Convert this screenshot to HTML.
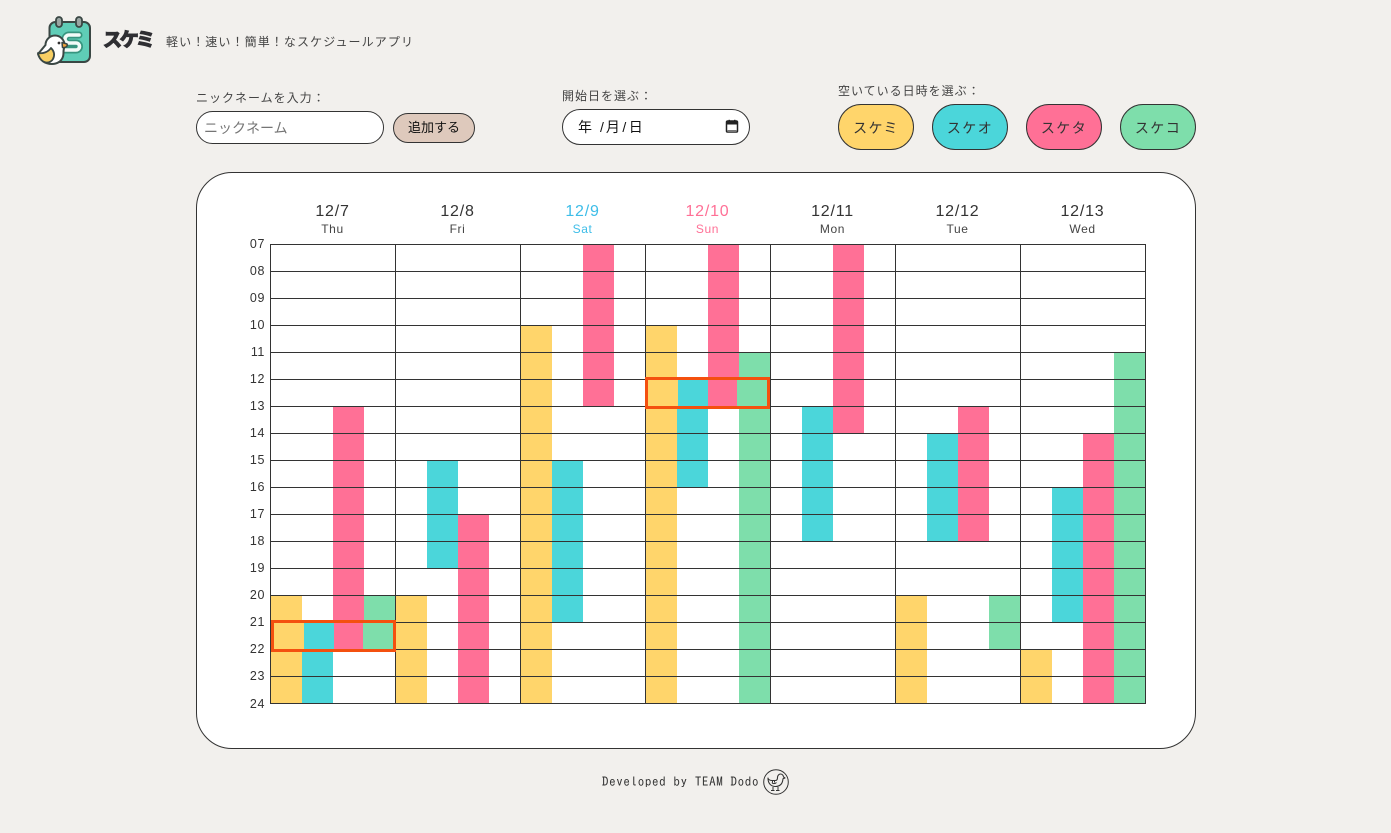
<!DOCTYPE html>
<html lang="ja"><head><meta charset="utf-8"><title>スケミ</title>
<style>
*{box-sizing:border-box}
html,body{margin:0;padding:0}
body{width:1391px;height:833px;background:#f2f0ed;position:relative;overflow:hidden;font-family:"Liberation Sans","Noto Sans CJK JP",sans-serif;color:#333}
.a{position:absolute;white-space:nowrap}
.lb{font-size:12px;letter-spacing:1px;line-height:16px;color:#444;top:0}
.pill{position:absolute;top:104px;width:76px;height:46px;border:1px solid #333;border-radius:23px;text-align:center;line-height:46px;font-size:14px;letter-spacing:1.4px}
.card{position:absolute;left:196px;top:172px;width:1000px;height:577px;background:#fff;border:1px solid #333;border-radius:36px}
.d{position:absolute;width:125px;text-align:center;top:203px;font-size:16px;line-height:18px;letter-spacing:.8px;color:#333}
.w{position:absolute;width:125px;text-align:center;top:222px;font-size:12px;line-height:14px;letter-spacing:.6px;color:#444}
.h{position:absolute;left:239px;width:26px;text-align:right;font-size:12.500px;line-height:14px;letter-spacing:.6px;color:#333}
.hl{position:absolute;left:270px;width:876px;height:1px;background:#333}
.vl{position:absolute;top:244px;width:1px;height:460px;background:#333}
.b{position:absolute;width:31px}
.y{background:#ffd56b}.c{background:#4bd6da}.p{background:#ff7096}.g{background:#7edeab}
.box{position:absolute;border:3px solid #f4500f;height:32px;width:125px;display:flex}
.box i{display:block;flex:1;height:100%}
</style></head><body>

<svg class="a" style="left:34px;top:14px" width="60" height="54" viewBox="0 0 60 54">
<rect x="15.500" y="8" width="40.500" height="40" rx="6" fill="#5fcdb7" stroke="#3a4744" stroke-width="2"/>
<rect x="22" y="3" width="6" height="10" rx="3" fill="#9aa5a2" stroke="#3a4744" stroke-width="1.800"/>
<rect x="42" y="3" width="6" height="10" rx="3" fill="#9aa5a2" stroke="#3a4744" stroke-width="1.800"/>
<path d="M45 21H35a4 4 0 0 0 0 8h7a3.500 3.500 0 0 1 0 7H31" fill="none" stroke="#37957f" stroke-width="7" stroke-linecap="round"/>
<path d="M45 21H35a4 4 0 0 0 0 8h7a3.500 3.500 0 0 1 0 7H31" fill="none" stroke="#f2fbf8" stroke-width="3.600" stroke-linecap="round"/>
<path d="M11.500 31a9.500 9.500 0 0 1 19 0c0 2.500-1 4-1 6.500 0 2 0 3.500-.5 5-1.500 5-6 7.500-11 7.500-7 0-12-3.500-14-10z" fill="#fff" stroke="#3a4744" stroke-width="2" stroke-linejoin="round"/>
<path d="M4 39c5 1 10-1 13-5 3 3 4 7 2 11-1 2-4 4-7 3.500C8 47.500 5 44 4 39z" fill="#f7cf63" stroke="#3a4744" stroke-width="1.800" stroke-linejoin="round"/>
<path d="M28 28.500l5 1.500c1 2-1 4-4.500 3.500z" fill="#f0a33c" stroke="#3a4744" stroke-width="1.500" stroke-linejoin="round"/>
<circle cx="25" cy="29" r="1.400" fill="#333"/>
</svg>
<div class="a" style="left:103px;top:27px;font-size:19px;line-height:28px;font-weight:700;color:#2f2f33;letter-spacing:-2.300px;-webkit-text-stroke:1.300px #2f2f33">スケミ</div>
<div class="a" style="left:166px;top:34px;font-size:12px;line-height:16px;letter-spacing:1.100px;color:#444">軽い！速い！簡単！なスケジュールアプリ</div>

<div class="a lb" style="left:196px;top:90px">ニックネームを入力：</div>
<input class="a" placeholder="ニックネーム" style="left:196px;top:111px;width:188px;height:33px;border:1px solid #333;border-radius:17px;background:#fff;padding:0 7px;font:14px 'Liberation Sans','Noto Sans CJK JP',sans-serif;outline:0">
<div class="a" style="left:393px;top:113px;width:82px;height:30px;border:1px solid #333;border-radius:15px;background:#dec9bc;text-align:center;line-height:28px;font-size:13px;color:#111">追加する</div>

<div class="a lb" style="left:562px;top:88px">開始日を選ぶ：</div>
<div class="a" style="left:562px;top:109px;width:188px;height:36px;border:1px solid #333;border-radius:18px;background:#fff;font-size:14px;line-height:34px;color:#111;padding-left:15px">年<span style="margin-left:8px;margin-right:2px">/</span>月<span style="margin:0 2.500px">/</span>日
<svg style="position:absolute;left:162px;top:9px" width="14" height="14" viewBox="0 0 14 14"><path d="M2.500 2h9A1.200 1.200 0 0 1 12.500 3.200V12a1 1 0 0 1-1 1h-9a1 1 0 0 1-1-1V3.200A1.200 1.200 0 0 1 2.500 2z" fill="none" stroke="#222" stroke-width="1.500"/><rect x="1.500" y="2" width="11" height="3.500" fill="#222"/><rect x="3.500" y="0.800" width="1.500" height="2" fill="#222"/><rect x="9" y="0.800" width="1.500" height="2" fill="#222"/><rect x="2.500" y="11" width="9" height="2" fill="#777"/></svg></div>

<div class="a lb" style="left:838px;top:83px">空いている日時を選ぶ：</div>
<div class="pill y" style="left:838px">スケミ</div>
<div class="pill c" style="left:932px">スケオ</div>
<div class="pill p" style="left:1026px">スケタ</div>
<div class="pill g" style="left:1120px">スケコ</div>

<div class="card"></div>

<div class="d" style="left:270px">12/7</div><div class="w" style="left:270px">Thu</div>
<div class="d" style="left:395px">12/8</div><div class="w" style="left:395px">Fri</div>
<div class="d" style="left:520px;color:#3dbde8">12/9</div><div class="w" style="left:520px;color:#3dbde8">Sat</div>
<div class="d" style="left:645px;color:#ff7096">12/10</div><div class="w" style="left:645px;color:#ff7096">Sun</div>
<div class="d" style="left:770px">12/11</div><div class="w" style="left:770px">Mon</div>
<div class="d" style="left:895px">12/12</div><div class="w" style="left:895px">Tue</div>
<div class="d" style="left:1020px">12/13</div><div class="w" style="left:1020px">Wed</div>

<div class="h" style="top:237px">07</div><div class="h" style="top:264px">08</div><div class="h" style="top:291px">09</div><div class="h" style="top:318px">10</div><div class="h" style="top:345px">11</div><div class="h" style="top:372px">12</div><div class="h" style="top:399px">13</div><div class="h" style="top:426px">14</div><div class="h" style="top:453px">15</div><div class="h" style="top:480px">16</div><div class="h" style="top:507px">17</div><div class="h" style="top:534px">18</div><div class="h" style="top:561px">19</div><div class="h" style="top:588px">20</div><div class="h" style="top:615px">21</div><div class="h" style="top:642px">22</div><div class="h" style="top:669px">23</div><div class="h" style="top:697px">24</div>

<!-- 12/7 -->
<div class="b y" style="left:271px;top:596px;height:107px"></div>
<div class="b c" style="left:302px;top:623px;height:80px"></div>
<div class="b p" style="left:333px;top:407px;height:242px"></div>
<div class="b g" style="left:364px;top:596px;height:53px"></div>
<!-- 12/8 -->
<div class="b y" style="left:396px;top:596px;height:107px"></div>
<div class="b c" style="left:427px;top:461px;height:107px"></div>
<div class="b p" style="left:458px;top:515px;height:188px"></div>
<!-- 12/9 -->
<div class="b y" style="left:521px;top:326px;height:377px"></div>
<div class="b c" style="left:552px;top:461px;height:161px"></div>
<div class="b p" style="left:583px;top:245px;height:161px"></div>
<!-- 12/10 -->
<div class="b y" style="left:646px;top:326px;height:377px"></div>
<div class="b c" style="left:677px;top:380px;height:107px"></div>
<div class="b p" style="left:708px;top:245px;height:161px"></div>
<div class="b g" style="left:739px;top:353px;height:350px"></div>
<!-- 12/11 -->
<div class="b c" style="left:802px;top:407px;height:134px"></div>
<div class="b p" style="left:833px;top:245px;height:188px"></div>
<!-- 12/12 -->
<div class="b y" style="left:896px;top:596px;height:107px"></div>
<div class="b c" style="left:927px;top:434px;height:107px"></div>
<div class="b p" style="left:958px;top:407px;height:134px"></div>
<div class="b g" style="left:989px;top:596px;height:53px"></div>
<!-- 12/13 -->
<div class="b y" style="left:1021px;top:650px;height:53px"></div>
<div class="b c" style="left:1052px;top:488px;height:134px"></div>
<div class="b p" style="left:1083px;top:434px;height:269px"></div>
<div class="b g" style="left:1114px;top:353px;height:350px"></div>

<div class="hl" style="top:244px"></div><div class="hl" style="top:271px"></div><div class="hl" style="top:298px"></div><div class="hl" style="top:325px"></div><div class="hl" style="top:352px"></div><div class="hl" style="top:379px"></div><div class="hl" style="top:406px"></div><div class="hl" style="top:433px"></div><div class="hl" style="top:460px"></div><div class="hl" style="top:487px"></div><div class="hl" style="top:514px"></div><div class="hl" style="top:541px"></div><div class="hl" style="top:568px"></div><div class="hl" style="top:595px"></div><div class="hl" style="top:622px"></div><div class="hl" style="top:649px"></div><div class="hl" style="top:676px"></div><div class="hl" style="top:703px"></div>
<div class="vl" style="left:270px"></div><div class="vl" style="left:395px"></div><div class="vl" style="left:520px"></div><div class="vl" style="left:645px"></div><div class="vl" style="left:770px"></div><div class="vl" style="left:895px"></div><div class="vl" style="left:1020px"></div><div class="vl" style="left:1145px"></div>

<div class="box" style="left:271px;top:620px"><i class="y"></i><i class="c"></i><i class="p"></i><i class="g"></i></div>
<div class="box" style="left:645px;top:377px;width:125px"><i class="y"></i><i class="c"></i><i class="p"></i><i class="g"></i></div>

<div class="a" style="left:602px;top:774px;font-family:'IPAGothic','Liberation Mono',monospace;font-size:13px;line-height:16px;letter-spacing:.64px;color:#333">Developed by TEAM Dodo</div>
<svg class="a" style="left:763px;top:769px" width="26" height="26" viewBox="0 0 26 26" fill="none" stroke="#333">
<circle cx="13" cy="13" r="12.300" stroke-width="1"/>
<path d="M5 9.500c1 1.500 2.500 2 4 2h3.500c1.500 0 2-1.500 2-3 0-2 1.500-3.500 3-3.500s3 1.300 3 3l1.500 1-2 .8c-.3 2.500-.5 4-2 5.500-1.500 1.500-3.500 2.200-5.500 2.200-4.500 0-7.500-3-7.500-8.500z" stroke-width="1.100" stroke-linejoin="round"/>
<path d="M9 13.500c.5 1.500 3 1.500 4.500 0M9.500 11.500v2M11.500 11.500v2M10 18v3M15 18v3M8 21.500h3.500M13 21.500h3.500" stroke-width="1"/>
</svg>
</body></html>
